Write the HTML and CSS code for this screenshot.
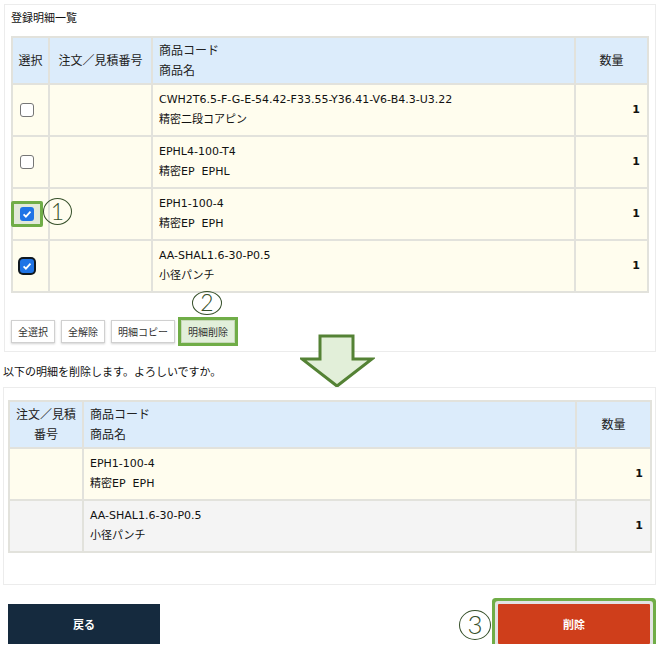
FILE: index.html
```html
<!DOCTYPE html>
<html>
    <head>
        <meta charset="utf-8" />
        <title>登録明細一覧</title>
        <link rel="stylesheet" href="styles.css">
    </head>
    <body>
        <div class="page">
            <section class="panel list-panel">
                <h2 class="panel-title">登録明細一覧</h2>
                <table class="grid list-grid">
                    <colgroup>
                        <col class="c-sel" />
                        <col class="c-no" />
                        <col />
                        <col class="c-qty" />
                    </colgroup>
                    <thead>
                        <tr>
                            <th>選択</th>
                            <th>注文／見積番号</th>
                            <th class="left">商品コード<br />商品名</th>
                            <th>数量</th>
                        </tr>
                    </thead>
                    <tbody>
                        <tr>
                            <td class="sel"><span class="cb"></span></td>
                            <td></td>
                            <td>CWH2T6.5-F-G-E-54.42-F33.55-Y36.41-V6-B4.3-U3.22<br />精密二段コアピン</td>
                            <td class="qty">1</td>
                        </tr>
                        <tr>
                            <td class="sel"><span class="cb"></span></td>
                            <td></td>
                            <td>EPHL4-100-T4<br />精密EP&nbsp;&nbsp;EPHL</td>
                            <td class="qty">1</td>
                        </tr>
                        <tr>
                            <td class="sel">
                                <span class="cb-mark"
                                    ><span class="cb checked"
                                        ><svg viewBox="0 0 14 14"><path d="M3.6 7.3l2.3 2.3 4.6-4.9" /></svg></span
                                ></span>
                            </td>
                            <td></td>
                            <td>EPH1-100-4<br />精密EP&nbsp;&nbsp;EPH</td>
                            <td class="qty">1</td>
                        </tr>
                        <tr>
                            <td class="sel">
                                <span class="cb checked focused"
                                    ><svg viewBox="0 0 14 14"><path d="M3.6 7.3l2.3 2.3 4.6-4.9" /></svg
                                ></span>
                            </td>
                            <td></td>
                            <td>AA-SHAL1.6-30-P0.5<br />小径パンチ</td>
                            <td class="qty">1</td>
                        </tr>
                    </tbody>
                </table>
                <div class="btn-row">
                    <button class="btn-sm">全選択</button>
                    <button class="btn-sm">全解除</button>
                    <button class="btn-sm">明細コピー</button>
                    <button class="btn-sm marked">明細削除</button>
                </div>
                <span class="step step-1">1</span>
                <span class="step step-2">2</span>
            </section>

            <p class="confirm-msg">以下の明細を削除します。よろしいですか。</p>

            <svg class="down-arrow" viewBox="0 0 75 56" width="75" height="56">
                <polygon points="20,3 53,3 53,26 72,26 37,53 2,26 20,26" />
            </svg>

            <section class="panel confirm-panel">
                <table class="grid confirm-grid">
                    <colgroup>
                        <col class="c-no2" />
                        <col />
                        <col class="c-qty2" />
                    </colgroup>
                    <thead>
                        <tr>
                            <th>注文／見積<br />番号</th>
                            <th class="left">商品コード<br />商品名</th>
                            <th>数量</th>
                        </tr>
                    </thead>
                    <tbody>
                        <tr>
                            <td></td>
                            <td>EPH1-100-4<br />精密EP&nbsp;&nbsp;EPH</td>
                            <td class="qty">1</td>
                        </tr>
                        <tr class="row-gray">
                            <td></td>
                            <td>AA-SHAL1.6-30-P0.5<br />小径パンチ</td>
                            <td class="qty">1</td>
                        </tr>
                    </tbody>
                </table>
            </section>

            <div class="action-row">
                <button class="btn-lg btn-back">戻る</button>
                <span class="del-wrap">
                    <span class="step step-3">3</span>
                    <button class="btn-lg btn-delete">削除</button>
                </span>
            </div>
        </div>
    </body>
</html>
```

FILE: styles.css
```css
html {
    margin: 0px;
    padding: 0px;
}
body {
    font-family: 'DejaVu Sans', 'Noto Sans CJK JP', sans-serif;
    font-size: 11px;
    margin: 0px;
    padding: 0px;
    color: #111;
    background-color: #fff;
}
.page {
    position: relative;
    width: 664px;
}
.panel {
    position: relative;
    background-color: #fff;
    border: 1px solid #ececec;
}
.list-panel {
    margin: 4px 8px 0px 4px;
    padding: 7px 6px 8px 6px;
}
.panel-title {
    font-size: 11px;
    line-height: 13px;
    margin: 0px 0px 11px 0px;
    font-weight: normal;
}

/* tables */
.grid {
    width: 100%;
    border-collapse: collapse;
    table-layout: fixed;
}
.grid th,
.grid td {
    border: 2px solid #e2e2dc;
    padding: 0px 6px;
    line-height: 20px;
    vertical-align: middle;
}
.grid th {
    background-color: #dcecfb;
    font-weight: normal;
    font-size: 12px;
    color: #222;
    text-align: center;
    padding: 0px 3px;
}
.grid th.left {
    text-align: left;
    padding: 0px 6px;
}
.grid td {
    background-color: #fffdee;
}
.grid thead tr {
    height: 47px;
}
.grid tbody tr {
    height: 52px;
}
.grid .row-gray td {
    background-color: #f4f4f4;
}
.grid td.qty {
    text-align: right;
    font-weight: bold;
    padding-right: 7px;
}
.grid td.sel {
    padding: 0px 0px 0px 7px;
}
.c-sel {
    width: 37px;
}
.c-no {
    width: 103px;
}
.c-qty {
    width: 73px;
}
.c-no2 {
    width: 74px;
}
.c-qty2 {
    width: 75px;
}

/* checkboxes */
.cb {
    display: inline-block;
    vertical-align: middle;
    box-sizing: border-box;
    width: 14px;
    height: 14px;
    border: 1px solid #767676;
    border-radius: 3px;
    background-color: #fff;
}
.cb svg {
    display: block;
    width: 14px;
    height: 14px;
}
.cb path {
    fill: none;
    stroke: #fff;
    stroke-width: 1.8;
}
.cb.checked {
    border: none;
    background-color: #1f74e6;
}
.cb.focused {
    box-shadow: 0px 0px 0px 2px #101820;
}
.cb-mark {
    display: inline-block;
    vertical-align: middle;
    margin-left: -9px;
    padding: 3px 6px;
    border: 3px solid #70ad47;
    border-radius: 2px;
    background-color: #e2e9d9;
    line-height: 0px;
}

/* small buttons */
.btn-row {
    display: flex;
    gap: 6px;
    margin-top: 27px;
}
.btn-sm {
    height: 23px;
    padding: 0px 6px;
    font-family: 'Noto Sans CJK JP', sans-serif;
    font-size: 10px;
    color: #333;
    background-color: #fff;
    border: 1px solid #d0d0d0;
    box-shadow: 0px 1px 2px rgba(0, 0, 0, 0.18);
}
.btn-sm.marked {
    background-color: #e2efda;
    outline: 3px solid #70ad47;
    border-color: #c6d8b8;
}

/* circled step numbers */
.step {
    position: absolute;
    box-sizing: border-box;
    width: 29px;
    height: 27px;
    border: 1.3px solid #36502a;
    border-radius: 50%;
    color: #36502a;
    font-family: 'Lato', 'Liberation Sans', sans-serif;
    font-weight: 300;
    font-size: 23px;
    line-height: 24px;
    text-align: center;
}
.step-1 {
    left: 38px;
    top: 193px;
}
.step-2 {
    left: 187px;
    top: 286px;
    width: 30px;
    height: 24px;
    line-height: 21px;
}
.step-3 {
    right: calc(100% + 7px);
    top: 6px;
    width: 32px;
    height: 30px;
    font-size: 26px;
    line-height: 27px;
}

.confirm-msg {
    margin: 12px 0px 9px 3px;
    line-height: 14px;
    font-family: 'Noto Sans CJK JP', sans-serif;
}
.down-arrow {
    position: absolute;
    left: 300px;
    top: 329px;
}
.down-arrow polygon {
    fill: #e2efd9;
    stroke: #548235;
    stroke-width: 3;
    stroke-linejoin: miter;
}

.confirm-panel {
    margin: 0px 8px 0px 3px;
    padding: 12px 3px 31px 4px;
}

/* big buttons */
.action-row {
    display: flex;
    justify-content: space-between;
    margin: 19px 14px 0px 8px;
}
.del-wrap {
    position: relative;
}
.btn-lg {
    width: 152px;
    height: 40px;
    border: none;
    font-family: 'Noto Sans CJK JP', sans-serif;
    font-size: 11px;
    font-weight: bold;
    color: #fff;
}
.btn-back {
    background-color: #152a3e;
}
.btn-delete {
    background-color: #cf3e1b;
    border-radius: 1px;
    box-shadow: 0px 0px 0px 3px #e3e3e3, 0px 0px 0px 6px #70ad47;
}
```
